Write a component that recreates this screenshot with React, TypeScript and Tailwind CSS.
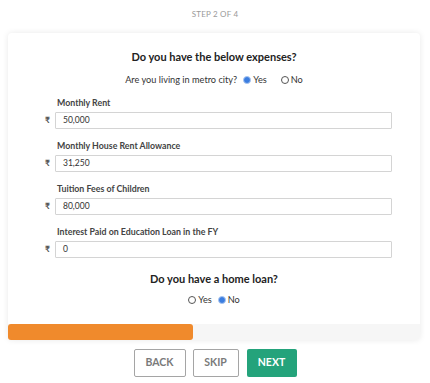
import React, { useState } from "react";

const Radio = ({ checked, label, onClick }: { checked: boolean; label: string; onClick: () => void }) => (
  <span onClick={onClick} className="flex items-center gap-[2px] cursor-pointer">
    {checked ? (
      <span className="w-[8px] h-[8px] rounded-full bg-[#3b7de0] border border-[#a9c6f0]" />
    ) : (
      <span className="w-[8px] h-[8px] rounded-full border border-[#555] bg-white" />
    )}
    <span>{label}</span>
  </span>
);

const fields = [
  { label: "Monthly Rent", value: "50,000" },
  { label: "Monthly House Rent Allowance", value: "31,250" },
  { label: "Tuition Fees of Children", value: "80,000" },
  { label: "Interest Paid on Education Loan in the FY", value: "0" },
];

export default function App() {
  const [metro, setMetro] = useState(true);
  const [homeLoan, setHomeLoan] = useState(false);

  return (
    <div className="w-[430px] h-[383px] bg-white font-['Lato',sans-serif] text-[#222] overflow-hidden">
      <p className="pt-[9px] text-center text-[8px] leading-[10px] text-[#9a9a9a] tracking-[0.2px]">STEP 2 OF 4</p>

      <div className="mx-[8px] mt-[14px] w-[412px] rounded-[4px] bg-white shadow-[0_0_6px_rgba(0,0,0,0.09)]">
        <div className="pt-[17px] pb-[18px] flex flex-col items-center">
          <h2 className="text-[11px] leading-[14px] font-bold text-[#222]">Do you have the below expenses?</h2>
          <div className="mt-[10px] flex items-center gap-[6px] text-[9.2px] leading-[12px] text-[#333]">
            <span>Are you living in metro city?</span>
            <Radio checked={metro} label="Yes" onClick={() => setMetro(true)} />
            <span className="w-[2px]" />
            <Radio checked={!metro} label="No" onClick={() => setMetro(false)} />
          </div>

          <div className="mt-[11px] w-full flex flex-col gap-[11px]">
            {fields.map((f) => (
              <div key={f.label} className="flex flex-col">
                <p className="pl-[49px] text-[8.8px] leading-[12px] font-bold text-[#444]">{f.label}</p>
                <div className="mt-[3px] flex items-center">
                  <span className="w-[47px] pr-[5px] text-right text-[8.5px] font-bold text-[#555]">₹</span>
                  <div className="w-[337px] h-[17px] border border-[#d4d4d4] rounded-[1px] flex items-center pl-[7px] text-[8.5px] text-[#333]">
                    {f.value}
                  </div>
                </div>
              </div>
            ))}
          </div>

          <h2 className="mt-[14px] text-[11px] leading-[14px] font-bold text-[#222]">Do you have a home loan?</h2>
          <div className="mt-[8px] flex items-center gap-[6px] text-[9.2px] leading-[12px] text-[#333]">
            <Radio checked={homeLoan} label="Yes" onClick={() => setHomeLoan(true)} />
            <Radio checked={!homeLoan} label="No" onClick={() => setHomeLoan(false)} />
          </div>
        </div>

        <div className="h-[16px] flex bg-[#f6f6f6] bg-[radial-gradient(circle,#e9e9e9_0.6px,transparent_0.7px)] bg-[length:4px_4px] rounded-b-[4px]">
          <div className="w-[185px] h-full rounded-[3px] bg-[#f08a2c] bg-[radial-gradient(circle,#f39a4c_0.6px,transparent_0.7px)] bg-[length:4px_4px]" />
        </div>
      </div>

      <div className="mt-[9px] flex justify-center gap-[7px]">
        <button className="w-[52px] h-[28px] border border-[#a5a5a5] rounded-[2px] text-[10.5px] font-bold text-[#7a7a7a] bg-white">BACK</button>
        <button className="w-[46px] h-[28px] border border-[#a5a5a5] rounded-[2px] text-[10.5px] font-bold text-[#7a7a7a] bg-white">SKIP</button>
        <button className="ml-[1px] w-[50px] h-[28px] rounded-[2px] text-[10.5px] font-bold text-white bg-[#24a37b]">NEXT</button>
      </div>
    </div>
  );
}
